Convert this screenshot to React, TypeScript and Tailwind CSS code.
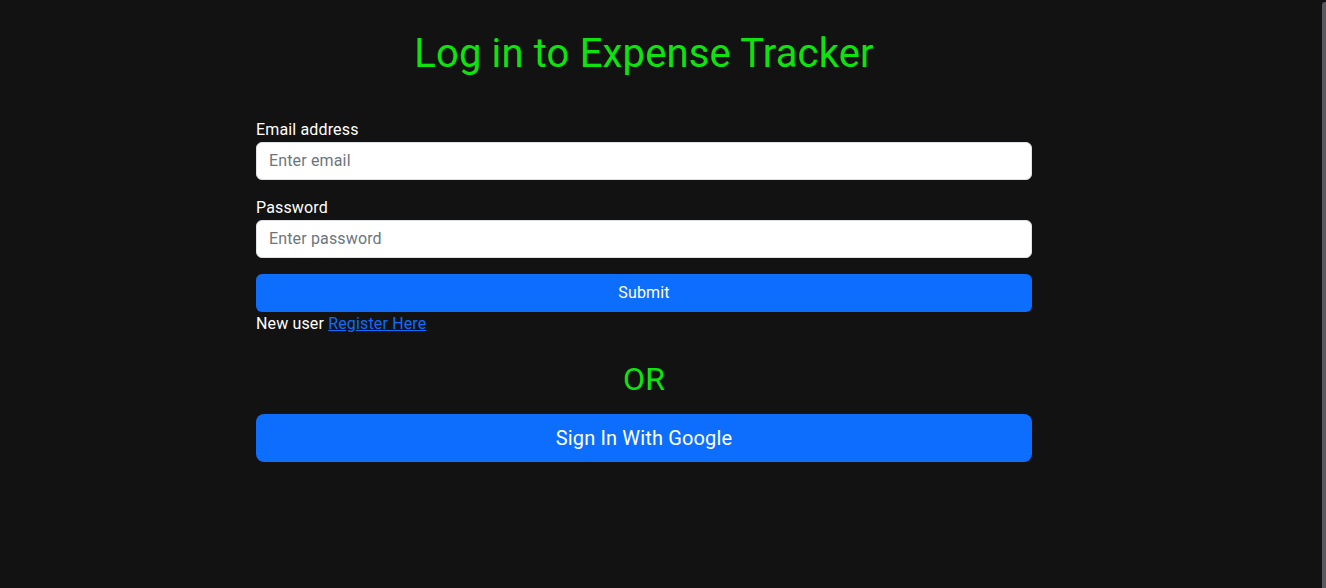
import React from "react";

export default function App() {
  return (
    <div
      className="flex w-full h-[588px] bg-[#121212] overflow-hidden tracking-[0.15px]"
      style={{ fontFamily: "Roboto, 'Liberation Sans', sans-serif" }}
    >
      <div className="flex-1 flex flex-col">
        <h1 className="mt-[30px] text-center text-[40px] leading-[48px] text-[#0fe30f] w-[1288px] font-normal">
          Log in to Expense Tracker
        </h1>
        <form className="ml-[256px] w-[776px] mt-[40px] flex flex-col">
          <label className="text-white text-[16px] leading-[24px]">Email address</label>
          <input
            type="email"
            placeholder="Enter email"
            className="h-[38px] bg-white rounded-[6px] border border-[#dee2e6] px-[12px] pb-[1px] text-[16px] text-[#212529] placeholder:text-[#6c757d] outline-none tracking-[0.15px]"
          />
          <label className="mt-[16px] text-white text-[16px] leading-[24px]">Password</label>
          <input
            type="password"
            placeholder="Enter password"
            className="h-[38px] bg-white rounded-[6px] border border-[#dee2e6] px-[12px] pb-[1px] text-[16px] text-[#212529] placeholder:text-[#6c757d] outline-none tracking-[0.15px]"
          />
          <button
            type="button"
            className="mt-[16px] h-[38px] bg-[#0d6efd] rounded-[6px] text-white text-[16px] tracking-[0.15px]"
          >
            Submit
          </button>
          <p className="text-white text-[16px] leading-[24px]">
            New user{" "}
            <a href="#" className="text-[#0d6efd] underline">
              Register Here
            </a>
          </p>
          <div className="mt-[24px] text-center text-[32px] leading-[38px] text-[#0fe30f]">OR</div>
          <button
            type="button"
            className="mt-[16px] h-[48px] bg-[#0d6efd] rounded-[8px] text-white text-[20px] tracking-[0.15px]"
          >
            Sign In With Google
          </button>
        </form>
      </div>
      <div className="w-[4px] mt-[2px] bg-[#5a5a5e] rounded-tl-[3px]" />
    </div>
  );
}
